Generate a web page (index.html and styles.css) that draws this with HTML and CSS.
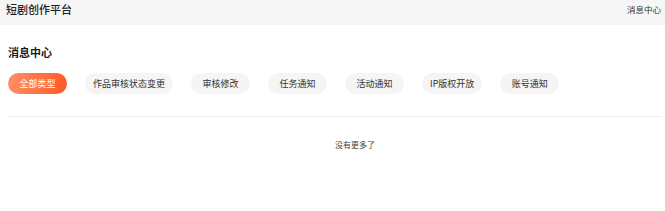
FILE: index.html
```html
<!DOCTYPE html>
<html lang="zh-CN">
<head>
<meta charset="utf-8">
<title>消息中心</title>
<link rel="stylesheet" href="styles.css">
</head>
<body>
<header class="topbar">
  <div class="brand">短剧创作平台</div>
  <div class="top-link">消息中心</div>
</header>
<main class="content">
  <h1 class="page-title">消息中心</h1>
  <div class="tabs">
    <span class="tab active">全部类型</span>
    <span class="tab">作品审核状态变更</span>
    <span class="tab">审核修改</span>
    <span class="tab">任务通知</span>
    <span class="tab">活动通知</span>
    <span class="tab">IP版权开放</span>
    <span class="tab">账号通知</span>
  </div>
  <div class="divider"></div>
  <div class="no-more">没有更多了</div>
</main>
</body>
</html>
```
FILE: styles.css
```css
* { box-sizing: border-box; }
html, body { margin: 0; padding: 0; background: #fff; }
body {
  font-family: "Noto Sans CJK SC", "Noto Sans", sans-serif;
  color: #222;
  width: 665px;
}
.topbar {
  height: 25px;
  background: #f6f6f6;
  display: flex;
  justify-content: space-between;
  align-items: flex-start;
  padding: 0 4px 0 6px;
}
.brand {
  font-size: 11px;
  line-height: 18px;
  color: #222;
  font-weight: 500;
}
.top-link {
  font-size: 8.5px;
  line-height: 18px;
  color: #333;
}
.content {
  padding: 0 3px 0 8px;
}
.page-title {
  margin: 20px 0 0;
  font-size: 11px;
  line-height: 14px;
  font-weight: 700;
  color: #1a1a1a;
}
.tabs {
  display: flex;
  gap: 18px;
  margin-top: 14px;
}
.tab {
  height: 21px;
  min-width: 59px;
  padding: 0 8px;
  border-radius: 11px;
  background: #f5f5f5;
  color: #333;
  font-size: 9px;
  line-height: 21px;
  text-align: center;
  white-space: nowrap;
}
.tab.active {
  background: linear-gradient(90deg, #ff8f66 0%, #ff5a26 100%);
  color: #fff;
}
.divider {
  height: 1px;
  background: #f0f0f0;
  margin-top: 22px;
}
.no-more {
  margin-top: 22px;
  padding-left: 40px;
  text-align: center;
  font-size: 8px;
  line-height: 12px;
  color: #444;
}
```
